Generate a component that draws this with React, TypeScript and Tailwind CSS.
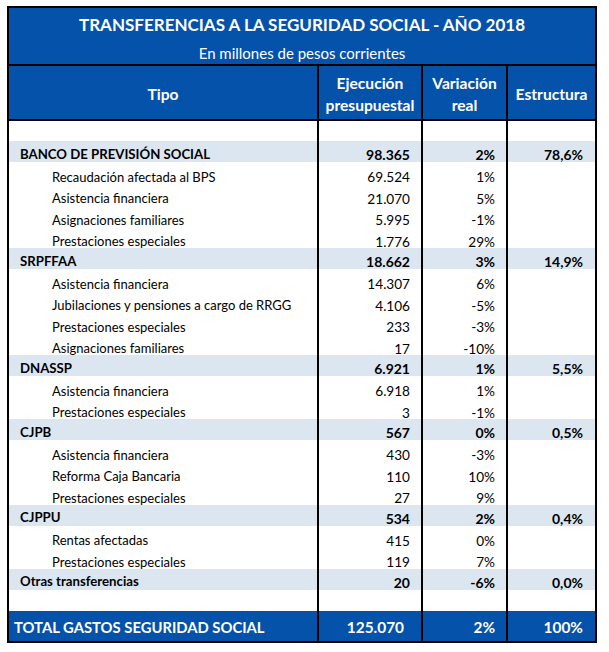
import React from "react";

type Row = { t: string; e: string; v: string; s?: string; main?: boolean };

const rows: Row[] = [
  { t: "BANCO DE PREVISIÓN SOCIAL", e: "98.365", v: "2%", s: "78,6%", main: true },
  { t: "Recaudación afectada al BPS", e: "69.524", v: "1%" },
  { t: "Asistencia financiera", e: "21.070", v: "5%" },
  { t: "Asignaciones familiares", e: "5.995", v: "-1%" },
  { t: "Prestaciones especiales", e: "1.776", v: "29%" },
  { t: "SRPFFAA", e: "18.662", v: "3%", s: "14,9%", main: true },
  { t: "Asistencia financiera", e: "14.307", v: "6%" },
  { t: "Jubilaciones y pensiones a cargo de RRGG", e: "4.106", v: "-5%" },
  { t: "Prestaciones especiales", e: "233", v: "-3%" },
  { t: "Asignaciones familiares", e: "17", v: "-10%" },
  { t: "DNASSP", e: "6.921", v: "1%", s: "5,5%", main: true },
  { t: "Asistencia financiera", e: "6.918", v: "1%" },
  { t: "Prestaciones especiales", e: "3", v: "-1%" },
  { t: "CJPB", e: "567", v: "0%", s: "0,5%", main: true },
  { t: "Asistencia financiera", e: "430", v: "-3%" },
  { t: "Reforma Caja Bancaria", e: "110", v: "10%" },
  { t: "Prestaciones especiales", e: "27", v: "9%" },
  { t: "CJPPU", e: "534", v: "2%", s: "0,4%", main: true },
  { t: "Rentas afectadas", e: "415", v: "0%" },
  { t: "Prestaciones especiales", e: "119", v: "7%" },
  { t: "Otras transferencias", e: "20", v: "-6%", s: "0,0%", main: true },
];

const cols = "grid grid-cols-[310px_104px_85px_87px]";

export default function App() {
  return (
    <div className="w-[609px] h-[652px] bg-white pt-[6px] pl-[7px]" style={{ fontFamily: "Lato, 'Open Sans', sans-serif" }}>
      <div className="w-[590px] border-2 border-black text-black">
        <div className="bg-[#0552aa] text-white">
          <div className="h-[33px] flex items-center justify-center text-[17px] font-bold pt-[1px] whitespace-nowrap">
            TRANSFERENCIAS A LA SEGURIDAD SOCIAL - AÑO 2018
          </div>
          <div className="h-[25px] flex items-center justify-center text-[15px] border-b-2 border-black whitespace-nowrap pt-[1px]">
            En millones de pesos corrientes
          </div>
        </div>
        <div className={`${cols} h-[55px] bg-[#0552aa] text-white font-bold text-[15.6px] leading-[22px] border-b-2 border-black`}>
          <div className="border-r-2 border-black flex items-center justify-center pt-[3px]">Tipo</div>
          <div className="border-r-2 border-black flex items-center justify-center text-center pt-[2px]">
            Ejecución<br />presupuestal
          </div>
          <div className="border-r-2 border-black flex items-center justify-center text-center pt-[2px]">
            Variación<br />real
          </div>
          <div className="flex items-center justify-center pt-[3px]">Estructura</div>
        </div>
        <div className={`${cols} h-[20px]`}>
          <div className="border-r-2 border-black" />
          <div className="border-r-2 border-black" />
          <div className="border-r-2 border-black" />
          <div />
        </div>
        {rows.map((r, i) => (
          <div
            key={i}
            className={`${cols} h-[21.4px] whitespace-nowrap ${r.main ? "bg-[#dce6f1] font-bold" : ""}`}
          >
            <div className={`border-r-2 border-black flex items-center ${r.main ? "pl-[11px] text-[13.2px] pt-[3px]" : "pl-[43px] text-[13px] pt-[5px]"}`}>
              {r.t}
            </div>
            <div className={`border-r-2 border-black flex items-center justify-end pr-[11px] ${r.main ? "text-[14px] pt-[3px]" : "text-[13.6px] pt-[5px]"}`}>{r.e}</div>
            <div className={`border-r-2 border-black flex items-center justify-end pr-[11px] ${r.main ? "text-[14px] pt-[3px]" : "text-[13.6px] pt-[5px]"}`}>{r.v}</div>
            <div className="flex items-center justify-end pr-[12px] pt-[3px] text-[14px]">{r.s ?? ""}</div>
          </div>
        ))}
        <div className={`${cols} h-[21px]`}>
          <div className="border-r-2 border-black" />
          <div className="border-r-2 border-black" />
          <div className="border-r-2 border-black" />
          <div />
        </div>
        <div className={`${cols} h-[30px] bg-[#0552aa] text-white font-bold whitespace-nowrap`}>
          <div className="border-r-2 border-black flex items-center pl-[5px] pt-[2px] text-[14.8px]">TOTAL GASTOS SEGURIDAD SOCIAL</div>
          <div className="border-r-2 border-black flex items-center justify-end pr-[17px] pt-[2px] text-[15.4px]">125.070</div>
          <div className="border-r-2 border-black flex items-center justify-end pr-[11px] pt-[2px] text-[15.4px]">2%</div>
          <div className="flex items-center justify-end pr-[12px] pt-[2px] text-[15.4px]">100%</div>
        </div>
      </div>
    </div>
  );
}
